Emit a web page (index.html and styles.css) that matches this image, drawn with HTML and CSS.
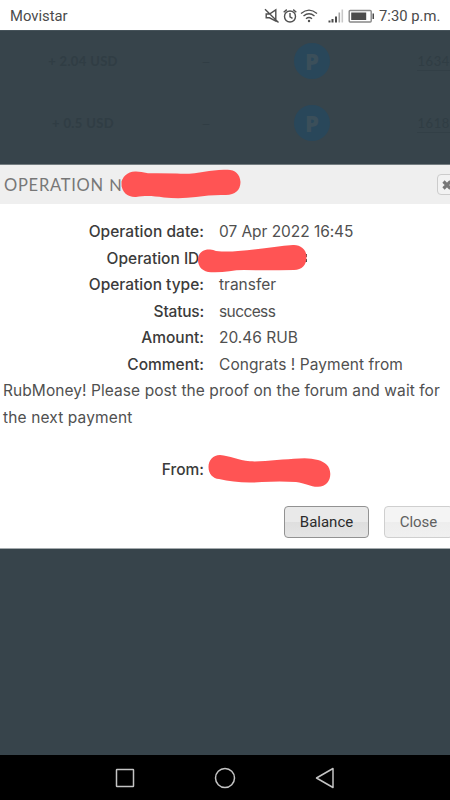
FILE: index.html
```html
<!DOCTYPE html>
<html lang="en">
<head>
<meta charset="utf-8">
<meta name="viewport" content="width=device-width, initial-scale=1">
<title>Operation</title>
<link rel="stylesheet" href="styles.css">
</head>
<body>
<header class="status-bar">
  <span class="carrier">Movistar</span>
  <svg class="status-icons" width="112" height="20" viewBox="0 0 112 20" fill="none" stroke="#505050" stroke-width="1.4">
    <path d="M2.2 8H5.500L11.800 3.800V15L5.500 11.800H2.200Z M1 3.300L14.500 16.500"/>
    <circle cx="26" cy="10.500" r="5.500"/><path d="M26 7V10.800L28.500 12.300M19.700 6.300L22.800 3.600M32.300 6.300L29.200 3.600"/>
    <path d="M37 7.500Q45 .8 53 7.500M39.500 10Q45 5.400 50.500 10M42 12.700Q45 10.200 48 12.700"/>
    <circle cx="45" cy="15" r="1.200" fill="#505050" stroke="none"/>
    <g stroke="none" fill="#4b4b4b"><path d="M64.500 14.500h2v2h-2zM67.500 13h2v3.500h-2zM71 10.500h2v6h-2z"/><path fill="#a5a5a5" d="M74.500 6.500h1.600v10h-1.600z"/><path fill="#c8c8c8" d="M77.500 3.500h1.600v13h-1.600z"/></g>
    <rect x="85.200" y="4.500" width="22" height="11.500" rx="1" stroke="#888"/>
    <path d="M87.200 6.500h15v7.500h-15zM108.500 7.500h1.500v5.500h-1.500z" fill="#4b4b4b" stroke="none"/>
  </svg>
  <span class="time">7:30 p.m.</span>
</header>
<main class="page">
  <section class="history">
    <div class="entry"><span class="sum">+ 2.04 USD</span><span class="dash">—</span><span class="coin">P</span><span class="number">1634</span></div>
    <div class="entry"><span class="sum">+ 0.5 USD</span><span class="dash">—</span><span class="coin">P</span><span class="number">1618</span></div>
  </section>
  <section class="dialog">
    <div class="dialog-head">
      <h1 class="title">OPERATION №</h1>
      <button class="dismiss" aria-label="Close"><svg width="10" height="10" viewBox="0 0 10 10"><path d="M1.500 1.500L8.500 8.500M8.500 1.500L1.500 8.500" stroke="#777" stroke-width="3.200"/></svg></button>
      <svg class="mark mark-title" width="120" height="30" viewBox="0 0 120 30"><path d="M15 1.500C7 1 0.500 7 0.500 14C0.500 22 7 27.500 15 27C25 25.500 32 26 43 27.500Q60 29 75 27Q90 24.500 105 25C114 25 119.500 20 119.500 12C119 4 114 -0.500 106 -0.300C88 -1 77 5 56 3.500Q37 3 27 3.300Q20 1.500 15 1.500Z"/></svg>
    </div>
    <div class="details">
      <div class="row"><span class="label l-date">Operation date:</span><span class="value v-date">07 Apr 2022 16:45</span></div>
      <div class="row row-id"><span class="label l-id">Operation ID:</span>
        <svg class="mark mark-id" width="110" height="28" viewBox="0 0 110 28"><path d="M108 9v3M108 14v3" stroke="#505050" stroke-width="2"/><path d="M11 4.500C4 4.500 0 9 0 15C0 22 5 27 13 27.200C25 28 34 25 46 25Q65 25.500 96 25C104 25 108.500 20 108.500 12C108.500 4 102 -0.500 95 0C79 1 61 4.500 40 6Q29 7 18 6Q15 4.200 11 4.500Z"/></svg></div>
      <div class="row"><span class="label l-type">Operation type:</span><span class="value v-type">transfer</span></div>
      <div class="row"><span class="label l-status">Status:</span><span class="value v-status">success</span></div>
      <div class="row"><span class="label l-amount">Amount:</span><span class="value v-amount">20.46 RUB</span></div>
      <div class="row"><span class="label l-comment">Comment:</span><span class="value v-comment">Congrats ! Payment from</span></div>
      <div class="row rest">RubMoney! Please post the proof on the forum and wait for</div>
      <div class="row rest last">the next payment</div>
      <div class="row row-from"><span class="label l-from">From:</span>
        <svg class="mark mark-from" width="123" height="34" viewBox="0 0 123 34"><path d="M12 1C5 1 0.500 6 0.500 13C0.500 20 5 24.500 11 25C24 28 38 29.500 54 28Q72 27 88 28C97 29 103 33 110 32.800C118 32.500 122.300 27 122.300 20C122.300 12 117 8 110 6Q101 3.500 91 4.500C76 5 56 8 42 7.300C30 6 22 2 12 1Z"/></svg></div>
    </div>
    <div class="actions"><button class="btn">Balance</button><button class="btn faded">Close</button></div>
  </section>
</main>
<nav class="nav-bar">
  <svg width="20" height="20" viewBox="0 0 20 20"><rect x="1.500" y="1.500" width="17" height="17" rx="0.500"/></svg>
  <svg width="22" height="22" viewBox="0 0 22 22"><circle cx="11" cy="11" r="9.500"/></svg>
  <svg width="20" height="22" viewBox="0 0 20 22"><path d="M18 1.500V20.500L1.500 11Z" stroke-linejoin="round"/></svg>
</nav>
</body>
</html>
```
FILE: styles.css
```css
* { box-sizing: border-box; }
body { margin: 0; width: 450px; height: 800px; overflow: hidden; display: flex; flex-direction: column; background: #37444b; font-family: Roboto, sans-serif; }
.status-bar { height: 30px; flex: none; display: flex; align-items: center; background: #fff; color: #4b4b4b; font-size: 14.8px; padding: 1px 0 0 10px; line-height: 30px; }
.carrier { width: 254px; flex: none; }
.status-icons { flex: none; }
.time { margin-left: 3px; white-space: nowrap; }
.page { height: 725px; flex: none; overflow: hidden; border-top: 1px solid #46535a; }
.history { height: 133px; font-family: Lato, sans-serif; font-weight: 700; color: #303d44; }
.entry { height: 62px; display: grid; grid-template-columns: 166px 80px 132px 72px; align-items: center; justify-items: center; font-size: 13px; padding-bottom: 2px; }
.sum { letter-spacing: .35px; }
.dash { font-size: 10px; }
.coin { width: 36px; height: 36px; border-radius: 50%; background: #29475a; color: #3b4f5a; display: grid; place-items: center; font: 800 22px "Open Sans", sans-serif; }
.number { justify-self: end; border-bottom: 1px solid #323f46; letter-spacing: .6px; line-height: 18px; font-weight: 400; }
.dialog { height: 385px; background: #fff; border-top: 1px solid #747d81; border-bottom: 1px solid #a4aaad; }
.dialog-head { height: 39px; background: #efefef; display: flex; align-items: center; justify-content: space-between; position: relative; }
.title { margin: 0 0 0 4px; font: 400 16.5px Lato, sans-serif; letter-spacing: .75px; color: #777; white-space: nowrap; }
.dismiss { width: 24px; height: 21px; margin-right: -11px; padding: 0 0 0 4px; display: flex; align-items: center; border: 1px solid #ccc; border-radius: 4px; background: #f2f2f2; }
.mark { position: absolute; fill: #ff5454; overflow: visible; }
.mark-title { left: 121px; top: 5px; }
.details { padding-top: 15px; font: 400 15.5px/26.5px Inter, sans-serif; color: #505050; }
.row { height: 26.5px; display: flex; white-space: nowrap; position: relative; }
.label { width: 204px; text-align: right; font-weight: 500; color: #3b3b3b; }
.value { margin-left: 15px; }
.l-status { letter-spacing: -.2px; }
.l-date { letter-spacing: .05px; }
.v-date { letter-spacing: -.05px; }
.v-status { letter-spacing: -.6px; }
.v-comment { letter-spacing: .06px; }
.mark-id { left: 198px; top: -.5px; }
.mark-from { left: 208px; top: -3px; }
.rest { padding-left: 3px; letter-spacing: .07px; }
.last { letter-spacing: .13px; }
.row-from { margin-top: 26px; }
.actions { display: flex; justify-content: flex-end; gap: 15px; margin: 22px -3px 0 0; }
.btn { flex: none; width: 85px; height: 32px; padding: 0; border: 1px solid #929292; border-radius: 4px; background: linear-gradient(#e9e9e9 0 50%, #dedede 50%, #e5e5e5); font: 400 15px Roboto, sans-serif; color: #2b2b2b; }
.faded { width: 69px; border-color: #cfcfcf; background: linear-gradient(#f4f4f4 0 50%, #ededed 50%, #f0f0f0); color: #606060; }
.nav-bar { height: 45px; flex: none; background: #000; display: flex; justify-content: space-between; align-items: center; padding: 0 115px; fill: none; stroke: #c4c4c4; stroke-width: 1.5; }
```
